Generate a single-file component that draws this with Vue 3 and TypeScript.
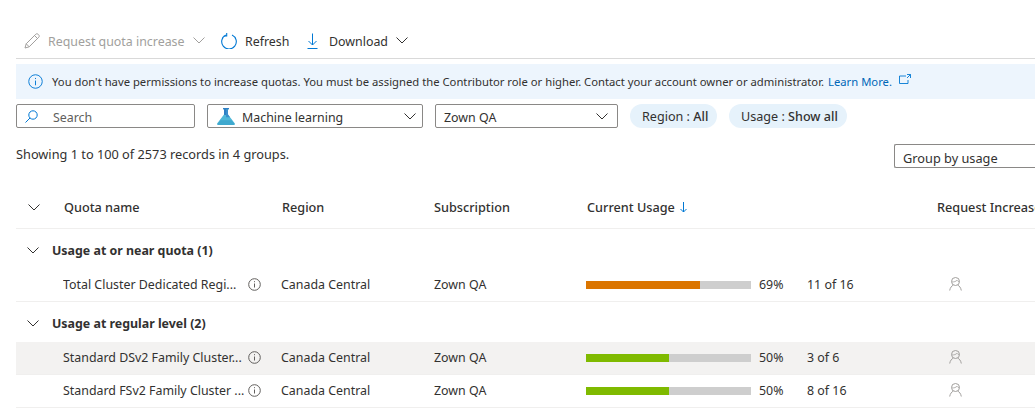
<script setup lang="ts">
interface Row { name: string; pct: number; label: string; of: string; color: string; hover?: boolean }
interface Group { title: string; rows: Row[] }
const groups: Group[] = [
  { title: 'Usage at or near quota (1)', rows: [
    { name: 'Total Cluster Dedicated Regi...', pct: 69, label: '69%', of: '11 of 16', color: '#db7500' },
  ]},
  { title: 'Usage at regular level (2)', rows: [
    { name: 'Standard DSv2 Family Cluster...', pct: 50, label: '50%', of: '3 of 6', color: '#7fba00', hover: true },
    { name: 'Standard FSv2 Family Cluster ...', pct: 50, label: '50%', of: '8 of 16', color: '#7fba00' },
  ]},
];
</script>

<template>
  <div class="page">
    <div class="toolbar">
      <div class="tool disabled first">
        <svg class="ic16" viewBox="0 0 16 16" fill="none" stroke="#a19f9d" stroke-width="1"><path d="M1 15l1.2-4.2L11.8 1.2c.7-.6 1.6-.6 2.2 0l.8.8c.6.7.6 1.6 0 2.2L5.200 13.800z"/><path d="M2.200 10.800l3 3M10.500 2.500l3 3"/></svg>
        <span>Request quota increase</span>
        <svg class="chev" viewBox="0 0 12 7" fill="none" stroke="#a19f9d"><path d="M.5.5L6 6l5.500-5.500"/></svg>
      </div>
      <div class="tool refresh">
        <svg class="ic16" viewBox="0 0 16 16" fill="none" stroke="#0078d4" stroke-width="1.100"><path d="M5 2A7.300 7.300 0 1 0 11 2"/><path d="M4.500 .2V3.200H1.500" transform="translate(1.200 -.2)"/></svg>
        <span>Refresh</span>
      </div>
      <div class="tool download">
        <svg class="ic-dl" viewBox="0 0 11 16" fill="none" stroke="#0078d4" stroke-width="1"><path d="M5.500 .5V12M1.500 8l4 4 4-4M.5 15.500h10"/></svg>
        <span>Download</span>
        <svg class="chev" viewBox="0 0 12 7" fill="none" stroke="#323130"><path d="M.5.5L6 6l5.500-5.500"/></svg>
      </div>
    </div>

    <div class="banner">
      <svg class="info" viewBox="0 0 16 16" fill="none" stroke="#0078d4"><circle cx="8" cy="8" r="7.200"/><path d="M8 7v5M8 4.200v1.200"/></svg>
      <span>You don't have permissions to increase quotas. You must be assigned the Contributor role or higher. Contact your account owner or administrator.</span>
      <a class="learn">Learn More.</a>
      <svg class="ext" viewBox="0 0 12 10" fill="none" stroke="#0078d4"><path d="M7 2H.5v7.500h8.500V6M8 .5h3.500V4M11.500 .5L8 4" stroke-width=".9"/></svg>
    </div>

    <div class="filters">
      <div class="field search">
        <svg class="mag" viewBox="0 0 13 13" fill="none" stroke="#0078d4"><circle cx="8" cy="5" r="4.200"/><path d="M5 8l-4.500 4.500"/></svg>
        <span class="placeholder">Search</span>
      </div>
      <div class="field ml">
        <svg class="flask" viewBox="0 0 18 17"><path d="M6 0h6v1.200h-1v5.300l6.700 8.800c.5.700 0 1.700-.8 1.700H1.100c-.8 0-1.300-1-.8-1.700L7 6.500V1.200H6z" fill="#50b8d8"/><path d="M7 1.200h2v5.800H7.400L7 6.500z M6 0h6v1.200H6z" fill="#2f7fc4"/><path d="M9 1.200h2v5.300l2 2.700H9z" fill="#3a8fcc"/><path d="M3.500 12.200h11l2.600 3.400c.3.600-.1 1.400-.8 1.400H1.700c-.7 0-1.100-.8-.8-1.400z" fill="#3fa9cf"/></svg>
        <span>Machine learning</span>
        <svg class="chev end" viewBox="0 0 12 7" fill="none" stroke="#323130"><path d="M.5.5L6 6l5.500-5.500"/></svg>
      </div>
      <div class="field sub">
        <span>Zown QA</span>
        <svg class="chev end" viewBox="0 0 12 7" fill="none" stroke="#323130"><path d="M.5.5L6 6l5.500-5.500"/></svg>
      </div>
      <div class="pill region">Region : <b>All</b></div>
      <div class="pill usage">Usage : <b>Show all</b></div>
    </div>

    <div class="summary">
      <span class="count">Showing 1 to 100 of 2573 records in 4 groups.</span>
      <div class="field groupby"><span>Group by usage</span></div>
    </div>

    <div class="row head">
      <svg class="chev lead" viewBox="0 0 12 7" fill="none" stroke="#323130"><path d="M.5.5L6 6l5.500-5.500"/></svg>
      <span class="h-name">Quota name</span>
      <span class="h-region">Region</span>
      <span class="c-sub">Subscription</span>
      <span class="h-usage">Current Usage
        <svg class="sort" viewBox="0 0 7 11" fill="none" stroke="#0078d4"><path d="M3.500 0v10M.5 7l3 3 3-3"/></svg>
      </span>
      <span class="c-req">Request Increase</span>
    </div>

    <template v-for="g in groups" :key="g.title">
      <div class="group">
        <svg class="chev" viewBox="0 0 12 7" fill="none" stroke="#323130"><path d="M.5.5L6 6l5.500-5.500"/></svg>
        <span>{{ g.title }}</span>
      </div>
      <div v-for="r in g.rows" :key="r.name" class="row data" :class="{ hover: r.hover }">
        <span class="c-name">{{ r.name }}</span>
        <svg class="tip" viewBox="0 0 13 13" fill="none" stroke="#605e5c"><circle cx="6.500" cy="6.500" r="5.800"/><path d="M6.500 5.500v4M6.500 3.200v1"/></svg>
        <span class="c-region">Canada Central</span>
        <span class="c-sub">Zown QA</span>
        <div class="bar-cell">
          <div class="bar"><div class="fill" :style="{ width: r.pct + '%', background: r.color }"></div></div>
          <span class="pct">{{ r.label }}</span>
          <span class="of">{{ r.of }}</span>
        </div>
        <svg class="person" viewBox="0 0 13 14" fill="none" stroke="#a19f9d"><circle cx="6.500" cy="4.500" r="4"/><path d="M3 4.800C5 5.200 7 4.400 8 3.200c.5.800 1.200 1.400 2.200 1.500" stroke-width=".8"/><path d="M.7 13.500C1.200 10.500 2.800 8.800 4.300 8.100M12.300 13.500C11.800 10.500 10.200 8.800 8.700 8.100"/></svg>
      </div>
    </template>
  </div>
</template>

<style>
html, body { margin: 0; background: #fff; overflow: hidden; }
</style>

<style scoped>
.page {
  width: 1035px;
  height: 415px;
  overflow: hidden;
  background: #fff;
  box-sizing: border-box;
  padding: 23px 0 0 16px;
  font-family: "Noto Sans", "Open Sans", sans-serif;
  font-size: 12.4px;
  color: #323130;
  white-space: nowrap;
}
svg { flex: none; display: block; }
.toolbar {
  display: flex;
  align-items: center;
  height: 35px;
  border-bottom: 1px solid #d9d9d9;
}
.tool { display: flex; align-items: center; }
.tool span { margin-left: 8px; padding-top: 2px; }
.first { margin-left: 8px; width: 197px; }
.disabled { color: #a19f9d; }
.chev { width: 12px; height: 7px; }
.tool .chev { margin-left: 8px; }
.ic16 { width: 16px; height: 16px; }
.ic-dl { width: 11px; height: 16px; margin-right: 3px; }
.refresh { width: 86px; }
.banner {
  display: flex;
  align-items: center;
  height: 35px;
  margin-top: 5px;
  padding-left: 12px;
  background: #edf5fd;
  font-size: 11.27px;
}
.info { width: 15px; height: 15px; margin-right: 9px; }
.learn { color: #0067b8; margin-left: 4px; }
.ext { width: 12px; height: 10px; margin: -6px 0 0 7px; }
.filters { display: flex; align-items: center; height: 24px; margin-top: 5px; }
.field {
  display: flex;
  align-items: center;
  height: 24px;
  box-sizing: border-box;
  border: 1px solid #8a8886;
  border-radius: 2px;
  flex: none;
}
.field span { padding-top: 2px; }
.search { width: 179px; }
.mag { width: 13px; height: 13px; margin-left: 8px; margin-right: 15px; }
.placeholder { color: #605e5c; }
.ml { width: 216px; margin-left: 12px; padding: 0 6px 0 9px; }
.flask { width: 18px; height: 17px; margin: 1px 7px 0 0; }
.ml span { padding-top: 3px; }
.end { margin-left: auto; }
.sub { width: 183px; margin-left: 12px; padding: 0 9px 0 8px; }
.pill {
  height: 24px;
  line-height: 26px;
  border-radius: 12px;
  background: #e6f2fb;
  padding: 0 0 0 12px;
  box-sizing: border-box;
  flex: none;
  font-size: 12.6px;
}
.pill b { font-weight: 500; }
.region { margin-left: 12px; width: 87px; }
.usage { margin-left: 12px; width: 118px; }
.summary { display: flex; align-items: flex-start; height: 45px; margin-top: 17px; font-size: 12.75px; }
.count { width: 272px; flex: none; line-height: 20px; margin-top: -1px; }
.groupby { margin-left: 606px; width: 180px; padding-left: 8px; margin-top: -1px; border-right: 0; }
.groupby span { padding-top: 3px; }
.row { display: flex; align-items: center; }
.head {
  height: 39px;
  border-bottom: 1px solid #f0efee;
  box-sizing: border-box;
  padding-bottom: 4px;
  font-size: 12.7px;
  font-weight: 500;
}
.lead { margin-left: 12px; }
.h-name { margin-left: 24px; width: 218px; flex: none; }
.h-region { width: 152px; flex: none; }
.c-sub { width: 152px; flex: none; }
.h-usage { width: 350px; flex: none; margin-left: 1px; display: flex; align-items: center; gap: 5px; }
.sort { width: 7px; height: 11px; }
.group {
  display: flex;
  align-items: center;
  height: 38px;
  margin-top: 2px;
  font-weight: 700;
  padding-left: 11px;
}
.group span { margin-left: 13px; }
.data {
  height: 33px;
  padding-bottom: 2px;
  box-sizing: border-box;
}
.group + .data, .data:last-child { border-bottom: 1px solid #f0efee; padding-bottom: 1px; }
.hover { background: #f3f2f1; }
.c-name { margin-left: 47px; width: 185px; flex: none; overflow: hidden; }
.tip { width: 13px; height: 13px; margin-right: 20px; }
.c-region { width: 153px; flex: none; }
.bar-cell { display: flex; align-items: center; width: 363px; flex: none; }
.bar { width: 165px; height: 8px; background: #cecece; flex: none; }
.fill { height: 100%; }
.pct { width: 48px; margin-left: 8px; flex: none; }
.of { flex: none; }
.person { width: 13px; height: 14px; margin-top: -2px; }
</style>
